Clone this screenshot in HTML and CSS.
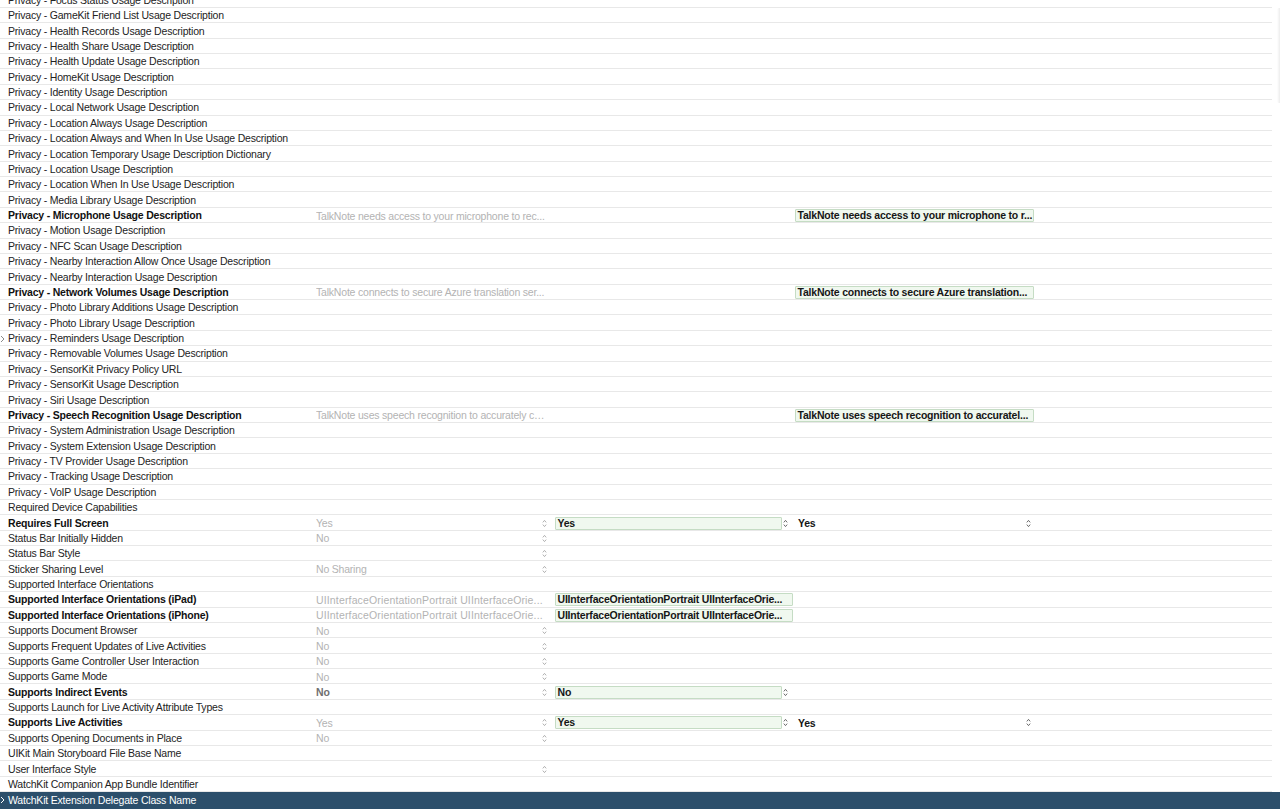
FILE: index.html
```html
<!DOCTYPE html>
<html>
<head>
<meta charset="utf-8">
<link rel="stylesheet" href="styles.css">
</head>
<body>
<div class="table">
  <div class="row"><div class="key">Privacy - Focus Status Usage Description</div></div>
  <div class="row"><div class="key">Privacy - GameKit Friend List Usage Description</div></div>
  <div class="row"><div class="key">Privacy - Health Records Usage Description</div></div>
  <div class="row"><div class="key">Privacy - Health Share Usage Description</div></div>
  <div class="row"><div class="key">Privacy - Health Update Usage Description</div></div>
  <div class="row"><div class="key">Privacy - HomeKit Usage Description</div></div>
  <div class="row"><div class="key">Privacy - Identity Usage Description</div></div>
  <div class="row"><div class="key">Privacy - Local Network Usage Description</div></div>
  <div class="row"><div class="key">Privacy - Location Always Usage Description</div></div>
  <div class="row"><div class="key">Privacy - Location Always and When In Use Usage Description</div></div>
  <div class="row"><div class="key">Privacy - Location Temporary Usage Description Dictionary</div></div>
  <div class="row"><div class="key">Privacy - Location Usage Description</div></div>
  <div class="row"><div class="key">Privacy - Location When In Use Usage Description</div></div>
  <div class="row"><div class="key">Privacy - Media Library Usage Description</div></div>
  <div class="row bold"><div class="key">Privacy - Microphone Usage Description</div><div class="c2"><span class="dim">TalkNote needs access to your microphone to rec...</span></div><div class="c3"></div><div class="c4"><span class="box wide4">TalkNote needs access to your microphone to r...</span></div></div>
  <div class="row"><div class="key">Privacy - Motion Usage Description</div></div>
  <div class="row"><div class="key">Privacy - NFC Scan Usage Description</div></div>
  <div class="row"><div class="key">Privacy - Nearby Interaction Allow Once Usage Description</div></div>
  <div class="row"><div class="key">Privacy - Nearby Interaction Usage Description</div></div>
  <div class="row bold"><div class="key">Privacy - Network Volumes Usage Description</div><div class="c2"><span class="dim">TalkNote connects to secure Azure translation ser...</span></div><div class="c3"></div><div class="c4"><span class="box wide4">TalkNote connects to secure Azure translation...</span></div></div>
  <div class="row"><div class="key">Privacy - Photo Library Additions Usage Description</div></div>
  <div class="row"><div class="key">Privacy - Photo Library Usage Description</div></div>
  <div class="row"><div class="key"><svg class="disc" viewBox="0 0 5 8"><path d="M1 1 L4 4 L1 7" fill="none" stroke="#8a8a8a" stroke-width="1"/></svg>Privacy - Reminders Usage Description</div></div>
  <div class="row"><div class="key">Privacy - Removable Volumes Usage Description</div></div>
  <div class="row"><div class="key">Privacy - SensorKit Privacy Policy URL</div></div>
  <div class="row"><div class="key">Privacy - SensorKit Usage Description</div></div>
  <div class="row"><div class="key">Privacy - Siri Usage Description</div></div>
  <div class="row bold"><div class="key">Privacy - Speech Recognition Usage Description</div><div class="c2"><span class="dim">TalkNote uses speech recognition to accurately co...</span></div><div class="c3"></div><div class="c4"><span class="box wide4">TalkNote uses speech recognition to accuratel...</span></div></div>
  <div class="row"><div class="key">Privacy - System Administration Usage Description</div></div>
  <div class="row"><div class="key">Privacy - System Extension Usage Description</div></div>
  <div class="row"><div class="key">Privacy - TV Provider Usage Description</div></div>
  <div class="row"><div class="key">Privacy - Tracking Usage Description</div></div>
  <div class="row"><div class="key">Privacy - VoIP Usage Description</div></div>
  <div class="row"><div class="key">Required Device Capabilities</div></div>
  <div class="row bold"><div class="key">Requires Full Screen</div><div class="c2 pop"><span class="dim">Yes</span><svg class="step light" viewBox="0 0 5 9"><path d="M0.8 3.4 L2.5 1.4 L4.2 3.4 M0.8 5.6 L2.5 7.6 L4.2 5.6" fill="none" stroke-width="0.9"/></svg></div><div class="c3 pop"><span class="box sel">Yes</span><svg class="step dark" viewBox="0 0 5 9"><path d="M0.8 3.4 L2.5 1.4 L4.2 3.4 M0.8 5.6 L2.5 7.6 L4.2 5.6" fill="none" stroke-width="0.9"/></svg></div><div class="c4 pop"><span class="plain">Yes</span><svg class="step dark" viewBox="0 0 5 9"><path d="M0.8 3.4 L2.5 1.4 L4.2 3.4 M0.8 5.6 L2.5 7.6 L4.2 5.6" fill="none" stroke-width="0.9"/></svg></div></div>
  <div class="row"><div class="key">Status Bar Initially Hidden</div><div class="c2 pop"><span class="dim">No</span><svg class="step light" viewBox="0 0 5 9"><path d="M0.8 3.4 L2.5 1.4 L4.2 3.4 M0.8 5.6 L2.5 7.6 L4.2 5.6" fill="none" stroke-width="0.9"/></svg></div></div>
  <div class="row"><div class="key">Status Bar Style</div><div class="c2 pop"><span class="dim"></span><svg class="step light" viewBox="0 0 5 9"><path d="M0.8 3.4 L2.5 1.4 L4.2 3.4 M0.8 5.6 L2.5 7.6 L4.2 5.6" fill="none" stroke-width="0.9"/></svg></div></div>
  <div class="row"><div class="key">Sticker Sharing Level</div><div class="c2 pop"><span class="dim">No Sharing</span><svg class="step light" viewBox="0 0 5 9"><path d="M0.8 3.4 L2.5 1.4 L4.2 3.4 M0.8 5.6 L2.5 7.6 L4.2 5.6" fill="none" stroke-width="0.9"/></svg></div></div>
  <div class="row"><div class="key">Supported Interface Orientations</div></div>
  <div class="row bold"><div class="key">Supported Interface Orientations (iPad)</div><div class="c2"><span class="dim spaced">UIInterfaceOrientationPortrait UIInterfaceOrie...</span></div><div class="c3"><span class="box wide3">UIInterfaceOrientationPortrait UIInterfaceOrie...</span></div></div>
  <div class="row bold"><div class="key">Supported Interface Orientations (iPhone)</div><div class="c2"><span class="dim spaced">UIInterfaceOrientationPortrait UIInterfaceOrie...</span></div><div class="c3"><span class="box wide3">UIInterfaceOrientationPortrait UIInterfaceOrie...</span></div></div>
  <div class="row"><div class="key">Supports Document Browser</div><div class="c2 pop"><span class="dim">No</span><svg class="step light" viewBox="0 0 5 9"><path d="M0.8 3.4 L2.5 1.4 L4.2 3.4 M0.8 5.6 L2.5 7.6 L4.2 5.6" fill="none" stroke-width="0.9"/></svg></div></div>
  <div class="row"><div class="key">Supports Frequent Updates of Live Activities</div><div class="c2 pop"><span class="dim">No</span><svg class="step light" viewBox="0 0 5 9"><path d="M0.8 3.4 L2.5 1.4 L4.2 3.4 M0.8 5.6 L2.5 7.6 L4.2 5.6" fill="none" stroke-width="0.9"/></svg></div></div>
  <div class="row"><div class="key">Supports Game Controller User Interaction</div><div class="c2 pop"><span class="dim">No</span><svg class="step light" viewBox="0 0 5 9"><path d="M0.8 3.4 L2.5 1.4 L4.2 3.4 M0.8 5.6 L2.5 7.6 L4.2 5.6" fill="none" stroke-width="0.9"/></svg></div></div>
  <div class="row"><div class="key">Supports Game Mode</div><div class="c2 pop"><span class="dim">No</span><svg class="step light" viewBox="0 0 5 9"><path d="M0.8 3.4 L2.5 1.4 L4.2 3.4 M0.8 5.6 L2.5 7.6 L4.2 5.6" fill="none" stroke-width="0.9"/></svg></div></div>
  <div class="row bold"><div class="key">Supports Indirect Events</div><div class="c2 pop"><span class="mid">No</span><svg class="step light" viewBox="0 0 5 9"><path d="M0.8 3.4 L2.5 1.4 L4.2 3.4 M0.8 5.6 L2.5 7.6 L4.2 5.6" fill="none" stroke-width="0.9"/></svg></div><div class="c3 pop"><span class="box sel">No</span><svg class="step dark" viewBox="0 0 5 9"><path d="M0.8 3.4 L2.5 1.4 L4.2 3.4 M0.8 5.6 L2.5 7.6 L4.2 5.6" fill="none" stroke-width="0.9"/></svg></div></div>
  <div class="row"><div class="key">Supports Launch for Live Activity Attribute Types</div></div>
  <div class="row bold"><div class="key">Supports Live Activities</div><div class="c2 pop"><span class="dim">Yes</span><svg class="step light" viewBox="0 0 5 9"><path d="M0.8 3.4 L2.5 1.4 L4.2 3.4 M0.8 5.6 L2.5 7.6 L4.2 5.6" fill="none" stroke-width="0.9"/></svg></div><div class="c3 pop"><span class="box sel">Yes</span><svg class="step dark" viewBox="0 0 5 9"><path d="M0.8 3.4 L2.5 1.4 L4.2 3.4 M0.8 5.6 L2.5 7.6 L4.2 5.6" fill="none" stroke-width="0.9"/></svg></div><div class="c4 pop"><span class="plain">Yes</span><svg class="step dark" viewBox="0 0 5 9"><path d="M0.8 3.4 L2.5 1.4 L4.2 3.4 M0.8 5.6 L2.5 7.6 L4.2 5.6" fill="none" stroke-width="0.9"/></svg></div></div>
  <div class="row"><div class="key">Supports Opening Documents in Place</div><div class="c2 pop"><span class="dim">No</span><svg class="step light" viewBox="0 0 5 9"><path d="M0.8 3.4 L2.5 1.4 L4.2 3.4 M0.8 5.6 L2.5 7.6 L4.2 5.6" fill="none" stroke-width="0.9"/></svg></div></div>
  <div class="row"><div class="key">UIKit Main Storyboard File Base Name</div></div>
  <div class="row"><div class="key">User Interface Style</div><div class="c2 pop"><span class="dim"></span><svg class="step light" viewBox="0 0 5 9"><path d="M0.8 3.4 L2.5 1.4 L4.2 3.4 M0.8 5.6 L2.5 7.6 L4.2 5.6" fill="none" stroke-width="0.9"/></svg></div></div>
  <div class="row"><div class="key">WatchKit Companion App Bundle Identifier</div></div>
  <div class="row selected"><div class="key"><svg class="disc" viewBox="0 0 5 8"><path d="M1 1 L4 4 L1 7" fill="none" stroke="#ffffff" stroke-width="1"/></svg>WatchKit Extension Delegate Class Name</div></div>
</div>
<div class="scroller"></div>
</body>
</html>
```

FILE: styles.css
```css
html, body {
  margin: 0;
  padding: 0;
  background: #ffffff;
  overflow: hidden;
  width: 1280px;
  height: 810px;
}

body {
  font-family: "Liberation Sans", Arial, sans-serif;
  font-size: 10.5px;
  letter-spacing: -0.2px;
  color: #232323;
  position: relative;
}

.table {
  display: flex;
  flex-direction: column;
  margin-top: -7.4px;
}

.row {
  height: 15.39px;
  box-sizing: border-box;
  display: grid;
  grid-template-columns: 308px 244px 241px 243px 1fr;
  align-items: center;
  position: relative;
  white-space: nowrap;
}

.row::after {
  content: "";
  position: absolute;
  left: 0;
  width: 1272px;
  bottom: 0;
  height: 1px;
  background: #e8e8e8;
}

.key {
  position: relative;
  padding-left: 8px;
  line-height: 15px;
  overflow: hidden;
}

.bold .key {
  font-weight: bold;
  color: #111111;
}

.disc {
  position: absolute;
  left: 0;
  top: 3.5px;
  width: 5px;
  height: 8px;
}

.c2, .c3, .c4 {
  display: flex;
  align-items: center;
  height: 15px;
  overflow: hidden;
}

.c2 {
  padding-left: 8px;
  padding-right: 5px;
}

.c2 .dim {
  color: #b3b3b3;
  font-weight: normal;
  flex: 1;
  overflow: hidden;
  text-overflow: ellipsis;
}

.c2 .dim.spaced {
  letter-spacing: 0.15px;
}

.c2 .mid {
  color: #6f6f6f;
  font-weight: bold;
  flex: 1;
}

.c3 {
  padding-left: 3px;
}

.c4 {
  padding-left: 2px;
}

.box {
  box-sizing: border-box;
  height: 13px;
  line-height: 11px;
  background: #f0f8ef;
  border: 1px solid #c5dcc4;
  border-radius: 1px;
  padding-left: 1.5px;
  font-weight: bold;
  color: #161616;
  overflow: hidden;
  text-overflow: ellipsis;
}

.box.wide4 { width: 239px; }
.box.wide3 { width: 238px; }
.box.sel { width: 227px; }

.plain {
  font-weight: bold;
  color: #161616;
  padding-left: 3px;
  width: 228px;
}

.step {
  width: 5px;
  height: 9px;
  flex: none;
}

.step.light { stroke: #a8a8a8; }
.step.dark { stroke: #5a5a5a; }

.c3 .step { margin-left: 1px; }

.row.selected {
  height: 16.4px;
  background: #2c4f6b;
  color: #ffffff;
}

.row.selected .key {
  color: #ffffff;
}

.row.selected::after {
  display: none;
}

.scroller {
  position: absolute;
  right: 0;
  top: 8px;
  width: 3px;
  height: 95px;
  background: linear-gradient(to right, #ffffff, #ededed);
  border-radius: 2px 0 0 2px;
}
```
